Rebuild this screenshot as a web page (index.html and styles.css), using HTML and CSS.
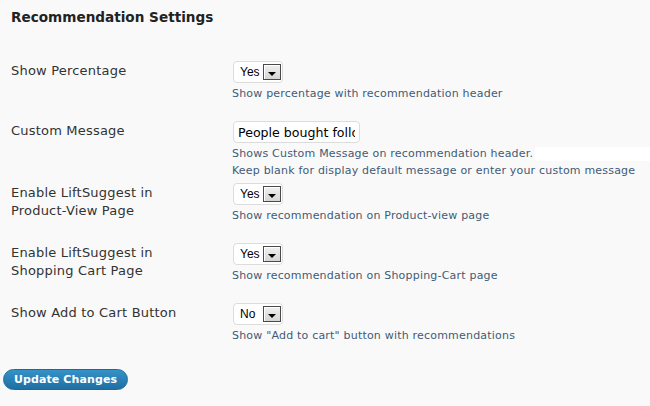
FILE: index.html
```html
<!DOCTYPE html>
<html lang="en">
<head>
<meta charset="utf-8">
<title>Recommendation Settings</title>
<link rel="stylesheet" href="styles.css">
</head>
<body>
<h2 class="title">Recommendation Settings</h2>
<form class="settings">
  <div class="row">
    <label class="label">Show Percentage</label>
    <div class="field">
      <span class="select"><select><option>Yes</option><option>No</option></select><span class="arrow"></span></span>
      <p class="desc">Show percentage with recommendation header</p>
    </div>
  </div>
  <div class="row">
    <label class="label">Custom Message</label>
    <div class="field">
      <input class="text" type="text" value="People bought following products">
      <p class="desc"><span class="first-line">Shows Custom Message on recommendation header.</span>Keep blank for display default message or enter your custom message</p>
    </div>
  </div>
  <div class="row">
    <label class="label">Enable LiftSuggest in<br>Product-View Page</label>
    <div class="field">
      <span class="select"><select><option>Yes</option><option>No</option></select><span class="arrow"></span></span>
      <p class="desc">Show recommendation on Product-view page</p>
    </div>
  </div>
  <div class="row">
    <label class="label">Enable LiftSuggest in<br>Shopping Cart Page</label>
    <div class="field">
      <span class="select"><select><option>Yes</option><option>No</option></select><span class="arrow"></span></span>
      <p class="desc">Show recommendation on Shopping-Cart page</p>
    </div>
  </div>
  <div class="row">
    <label class="label">Show Add to Cart Button</label>
    <div class="field">
      <span class="select"><select><option>No</option><option>Yes</option></select><span class="arrow"></span></span>
      <p class="desc">Show "Add to cart" button with recommendations</p>
    </div>
  </div>
  <button class="btn" type="button">Update Changes</button>
</form>
</body>
</html>
```

FILE: styles.css
```css
html, body {
  margin: 0;
  padding: 0;
  background: #f9f9f9;
}

body {
  padding: 9px 0 0 0;
  font-family: "DejaVu Sans", Verdana, sans-serif;
  color: #333;
}

.title {
  margin: 0 0 35px 11px;
  font-size: 13.6px;
  line-height: 17px;
  font-weight: bold;
  color: #222;
}

.settings {
  margin: 0;
}

.row {
  display: grid;
  grid-template-columns: 233px 1fr;
  min-height: 56px;
  padding-bottom: 4px;
}

.label {
  padding: 1px 0 0 11px;
  font-size: 13px;
  line-height: 18px;
  letter-spacing: 0.2px;
  color: #333;
}

.field {
  display: flex;
  flex-direction: column;
  align-items: flex-start;
}

.select {
  display: inline-flex;
  align-items: center;
  width: 50px;
  height: 22px;
  box-sizing: border-box;
  border: 1px solid #dcdcdc;
  border-radius: 4px;
  background: #fff;
  padding: 0 1px 0 6px;
}

.select select {
  appearance: none;
  -webkit-appearance: none;
  border: 0;
  background: transparent;
  padding: 0;
  margin: 0;
  flex: 1;
  width: 0;
  font: 12px "Liberation Sans", Arial, sans-serif;
  color: #000;
  outline: none;
}

.arrow {
  display: flex;
  align-items: center;
  justify-content: center;
  width: 18px;
  height: 16px;
  box-sizing: border-box;
  border: 1px solid #4a4a4a;
  background: linear-gradient(#f0f0f0, #d4d4d4);
  box-shadow: inset 1px 1px 0 #fff;
}

.arrow::after {
  content: "";
  width: 0;
  height: 0;
  margin-top: 3px;
  border-left: 4px solid transparent;
  border-right: 4px solid transparent;
  border-top: 4px solid #000;
}

.text {
  width: 127px;
  height: 22px;
  box-sizing: border-box;
  margin: 0;
  border: 1px solid #dcdcdc;
  border-radius: 4px;
  padding: 0 4px;
  background: #fff;
  font: 12.6px "DejaVu Sans", Verdana, sans-serif;
  color: #000;
  outline: none;
}

.desc {
  align-self: stretch;
  margin: 2px 0 0 -1px;
  font-size: 11px;
  line-height: 17px;
  letter-spacing: 0.2px;
  color: #3f5b76;
}

.first-line {
  display: flex;
  align-items: center;
}

.first-line::after {
  content: "";
  flex: 1;
  height: 14px;
  margin-left: 2px;
  background: #fff;
}

.btn {
  display: block;
  margin: 6px 0 0 3px;
  height: 21px;
  box-sizing: border-box;
  padding: 0 10px;
  border: 1px solid #1d6a99;
  border-radius: 11px;
  background: linear-gradient(#3592c8, #1f6fa3);
  color: #fff;
  font: bold 11px "DejaVu Sans", Verdana, sans-serif;
  letter-spacing: 0.1px;
  line-height: 19px;
  cursor: pointer;
}
```
